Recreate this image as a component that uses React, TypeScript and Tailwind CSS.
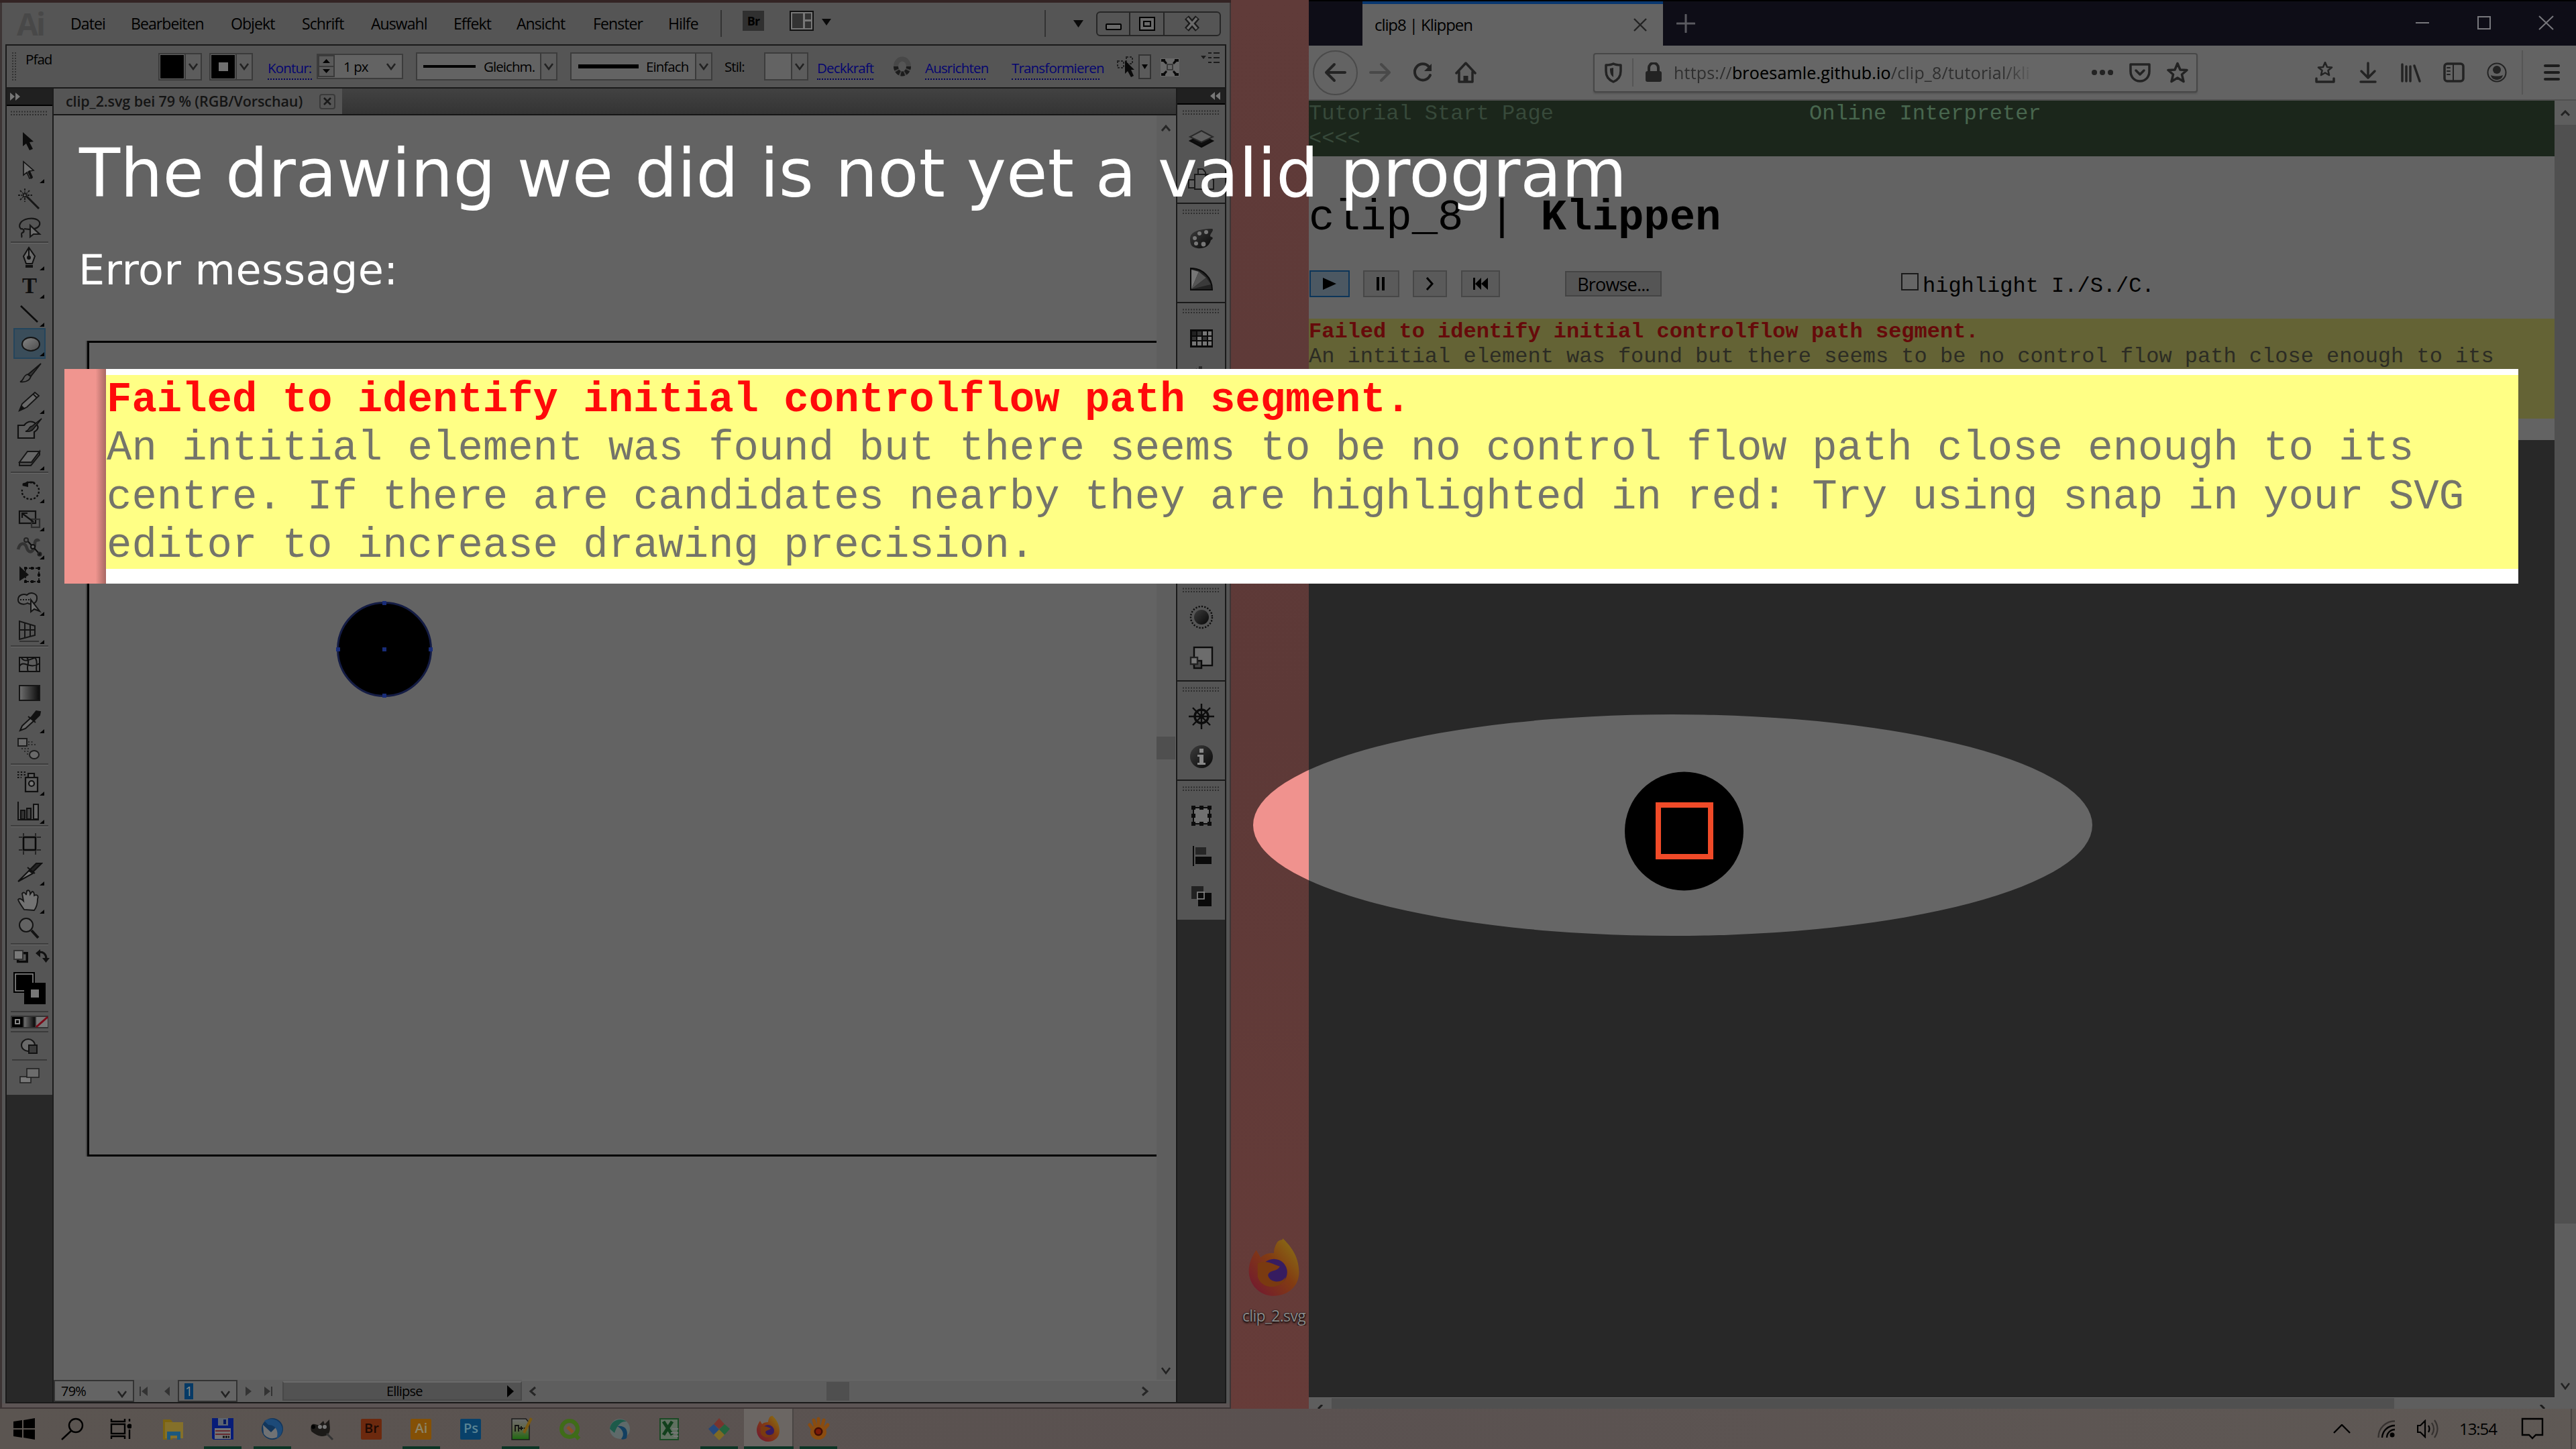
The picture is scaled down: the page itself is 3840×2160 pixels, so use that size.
import React from "react";

const UI = "font-['Open_Sans','Noto_Sans',sans-serif]";
const MONO = "font-['Liberation_Mono',monospace]";

/* ---------- shared bits ---------- */

const Chevron = ({ c = "" }: { c?: string }) => (
  <svg className={"shrink-0 " + c} width="16" height="12" viewBox="0 0 16 12" fill="none" stroke="#222" strokeWidth="2.6">
    <path d="M2 2 L8 10 L14 2" />
  </svg>
);

const Grip = ({ c = "" }: { c?: string }) => (
  <svg className={"shrink-0 " + c} width="56" height="8" viewBox="0 0 56 8" stroke="#2e2e2e" strokeWidth="2" strokeDasharray="2 2">
    <path d="M0 1.5H56M0 6H56" />
  </svg>
);

const Gradients = () => (
  <svg width="0" height="0" className="absolute">
    <defs>
      <linearGradient id="lite" x1="0" y1="0" x2="1" y2="1">
        <stop offset="0" stopColor="#858585" />
        <stop offset="1" stopColor="#4c4c4c" />
      </linearGradient>
      <linearGradient id="dark" x1="0" y1="0" x2="1" y2="1">
        <stop offset="0" stopColor="#3c3c3c" />
        <stop offset="1" stopColor="#080808" />
      </linearGradient>
      <linearGradient id="ramp" x1="0" y1="0" x2="1" y2="0">
        <stop offset="0" stopColor="#707070" />
        <stop offset="1" stopColor="#0a0a0a" />
      </linearGradient>
      <linearGradient id="flame" x1="1" y1="0" x2="0" y2="1">
        <stop offset="0" stopColor="#8a7816" />
        <stop offset="0.45" stopColor="#823c12" />
        <stop offset="1" stopColor="#701434" />
      </linearGradient>
      <linearGradient id="leaf" x1="0" y1="0" x2="0" y2="1">
        <stop offset="0" stopColor="#6c6c6c" />
        <stop offset="0.5" stopColor="#5d6648" />
        <stop offset="1" stopColor="#1c6a10" />
      </linearGradient>
    </defs>
  </svg>
);

/* ---------- Illustrator tool icons, drawn on a 40x40 grid ---------- */

const toolArt: Record<string, React.ReactNode> = {
  select: <path d="M10 6 L10 27 L15 23 L20 33 L25 31 L20 21 L26 20 Z" fill="#0c0c0c" />,
  direct: (
    <>
      <path d="M11 7 L11 27 L16 23 L20 32 L24 30 L20 21 L26 20 Z" fill="#6d6d6d" stroke="#111" strokeWidth="1.6" />
      <path d="M17 22 L22 33 L25 31 L20 20 Z" fill="#111" />
    </>
  ),
  wand: (
    <g stroke="#161616" fill="none" strokeWidth="1.8">
      <path d="M16 17 L34 35" strokeWidth="3" />
      <path d="M13 5V11M13 19V25M3 15H9M17 15H24M6 8L10 12M20 8L16 12M6 22L10 18" strokeDasharray="3 1.5" />
      <circle cx="13" cy="15" r="2.5" fill="#666" />
    </g>
  ),
  lasso: (
    <g stroke="#161616" fill="none" strokeWidth="2.2">
      <path d="M8 23 C2 18 6 9 18 7 C32 5 38 12 34 18 C31 22 22 24 12 22" />
      <path d="M8 22 C12 22 13 27 9 28 C6 31 10 31 8 35" />
      <path d="M21 17 L21 34 L26 30 L35 30 Z" fill="#6d6d6d" />
    </g>
  ),
  pen: (
    <g stroke="#111" fill="#6a6a6a" strokeWidth="2">
      <path d="M19 5 L11 18 L15 29 L24 29 L28 18 Z" />
      <path d="M19 6 V18" />
      <circle cx="19" cy="20" r="2" fill="#111" />
      <path d="M14 33 L25 33" strokeWidth="4" />
    </g>
  ),
  line: <path d="M7 8 L32 32" stroke="#0c0c0c" strokeWidth="2.6" />,
  ellipse: <ellipse cx="22" cy="21" rx="13" ry="10" fill="url(#lite)" stroke="#141414" strokeWidth="2" />,
  brush: (
    <g stroke="#141414" strokeWidth="1.8" fill="#555">
      <path d="M6 33 C12 31 10 24 17 22 L22 25 C20 32 13 34 6 33 Z" />
      <path d="M18 22 L37 6 L22 25 Z" fill="#333" />
    </g>
  ),
  pencil: (
    <g stroke="#141414" strokeWidth="1.8">
      <path d="M5 34 L9 24 L28 7 L34 12 L16 29 Z" fill="#6a6a6a" />
      <path d="M5 34 L8 27 L12 31 Z" fill="#111" />
      <path d="M25 9 L31 15" />
    </g>
  ),
  blob: (
    <g stroke="#111" strokeWidth="2.2" fill="none">
      <path d="M3 14 H12 C18 6 26 8 30 12 C36 18 30 22 27 24 V33 H3 Z" fill="#5c5c5c" />
      <path d="M14 23 C20 22 18 16 24 15 L38 4 L27 18 C24 23 18 24 14 23 Z" fill="#333" strokeWidth="1.5" />
    </g>
  ),
  eraser: (
    <g stroke="#161616" strokeWidth="2" fill="#676767">
      <path d="M5 27 L17 11 H35 L23 27 Z" />
      <path d="M5 27 V32 H22 L35 16 V11 L23 27 Z" fill="#4a4a4a" />
    </g>
  ),
  rotate: (
    <g stroke="#0e0e0e" strokeWidth="2.4" fill="none">
      <path d="M10 11 C22 4 34 11 34 20 C34 30 26 34 20 33 C12 32 8 27 9 19" strokeDasharray="3 2.4" />
      <path d="M10 12 C16 7 24 7 28 9" />
      <path d="M9 13 L18 6 V15 Z" fill="#0e0e0e" stroke="none" />
    </g>
  ),
  scale: (
    <g stroke="#111" strokeWidth="2.2" fill="none">
      <rect x="5" y="9" width="24" height="18" />
      <rect x="23" y="21" width="12" height="12" stroke="#2d2d2d" />
      <path d="M10 13 L26 25 M9 19 V12 H17" />
    </g>
  ),
  warp: (
    <g fill="none" stroke="#222" strokeWidth="2">
      <path d="M3 24 C6 12 14 14 16 22 C20 33 28 26 28 14 C29 9 33 9 34 12" strokeWidth="4.5" stroke="#333" />
      <path d="M14 8 L36 32" stroke="#0c0c0c" />
      <circle cx="15" cy="10" r="3" fill="#555" />
      <circle cx="25" cy="20" r="3" fill="#666" stroke="#111" />
      <circle cx="35" cy="31" r="2.5" fill="#111" />
    </g>
  ),
  free: (
    <g>
      <path d="M5 7 L5 29 L19 20 Z" fill="#101010" />
      <rect x="14" y="10" width="20" height="20" fill="none" stroke="#111" strokeWidth="1.8" strokeDasharray="3 2" />
      <path d="M12 8h4v4h-4zM22 8h4v4h-4zM32 8h4v4h-4zM12 28h4v4h-4zM22 28h4v4h-4zM32 28h4v4h-4zM32 18h4v4h-4z" fill="#0c0c0c" />
    </g>
  ),
  builder: (
    <g stroke="#141414" strokeWidth="2" fill="#5f5f5f">
      <path d="M3 15 C3 7 12 6 16 8 C22 2 32 6 31 13 C31 21 22 23 17 20 C12 23 3 22 3 15 Z" />
      <path d="M6 15 H20" strokeDasharray="2 2" />
      <path d="M22 15 V33 L27 29 L35 32 Z" fill="#6d6d6d" />
    </g>
  ),
  perspective: (
    <g stroke="#151515" strokeWidth="2" fill="none">
      <path d="M5 5 V32 L28 26 V12 Z M13 8V29M21 10V27M5 18H28" />
      <path d="M5 35 H34" stroke="#333" />
    </g>
  ),
  mesh: (
    <g stroke="#111" strokeWidth="2" fill="none">
      <rect x="5" y="9" width="30" height="21" fill="#5d5d5d" />
      <path d="M5 22 C12 12 20 28 35 18 M16 9 C22 16 14 22 18 30 M28 9 C34 16 28 24 31 30 M8 10 C14 18 24 10 30 9" />
    </g>
  ),
  gradient: <rect x="5" y="9" width="30" height="22" fill="url(#ramp)" stroke="#161616" strokeWidth="2" />,
  dropper: (
    <g stroke="#121212" strokeWidth="2">
      <path d="M6 35 L9 28 L22 16 L27 20 L14 32 Z" fill="#686868" />
      <path d="M18 14 L29 23 M22 16 L30 6 L36 7 L35 12 L27 20 Z" fill="#111" />
    </g>
  ),
  blend: (
    <g stroke="#1c1c1c" strokeWidth="2">
      <rect x="3" y="5" width="13" height="11" fill="#6a6a6a" />
      <ellipse cx="27" cy="29" rx="7" ry="6" fill="#6a6a6a" />
      <path d="M18 10H26M18 14H30M8 20H20M12 24H20M16 28H18" strokeDasharray="2 2.5" strokeWidth="1.6" />
    </g>
  ),
  spray: (
    <g stroke="#111" strokeWidth="2.2" fill="#5f5f5f">
      <rect x="14" y="13" width="18" height="21" />
      <path d="M18 12 V7 H27 V12" />
      <circle cx="23" cy="22" r="4" fill="#777" />
      <path d="M2 5H16M2 9H16M2 13H8" strokeDasharray="2.4 2.4" strokeWidth="2" />
    </g>
  ),
  graph: (
    <g stroke="#111" strokeWidth="2">
      <path d="M3 6 V33 H34" fill="none" />
      <rect x="7" y="19" width="6" height="13" fill="#333" />
      <rect x="16" y="16" width="6" height="16" fill="#444" />
      <rect x="26" y="10" width="7" height="22" fill="#666" />
    </g>
  ),
  artboard: (
    <g fill="none">
      <rect x="11" y="10" width="18" height="19" stroke="#0a0a0a" strokeWidth="2.6" />
      <path d="M4 10H9M4 29H9M31 10H37M31 29H37M11 4V8M29 4V8M11 31V36M29 31V36" stroke="#262626" strokeWidth="2" />
    </g>
  ),
  slice: (
    <g stroke="#101010" strokeWidth="2">
      <path d="M3 34 L19 18 L25 22 Z" fill="#777" />
      <path d="M17 13 L28 22 M20 17 L30 7 H38 L25 20 Z" fill="#222" />
    </g>
  ),
  hand: (
    <path
      d="M12 33 C8 27 4 22 3 18 C5 15 9 18 11 20 L9 9 C11 6 14 8 15 11 L16 5 C19 3 21 5 21 10 L24 6 C27 6 27 9 27 12 C31 10 34 12 32 17 C32 24 30 30 27 34 Z"
      fill="#727272"
      stroke="#151515"
      strokeWidth="1.8"
    />
  ),
  zoom: (
    <g stroke="#131313">
      <path d="M23 22 L33 33" strokeWidth="4" />
      <circle cx="15" cy="14" r="10" fill="#636363" strokeWidth="2" />
    </g>
  ),
};

const Tool = ({ name, corner = true }: { name: string; corner?: boolean }) => (
  <div className={"relative flex flex-1 items-center justify-center " + (name === "ellipse" ? "mx-[10px] border-2 border-[#24455c] bg-[#3a4d5a]" : "")}>
    {name === "type" ? (
      <span className="font-['Liberation_Serif',serif] text-[33px] font-bold leading-none text-[#0d0d0d]">T</span>
    ) : (
      <svg width="40" height="40" viewBox="0 0 40 40" className="shrink-0">
        {toolArt[name]}
      </svg>
    )}
    {corner && (
      <svg className={"absolute bottom-[2px] " + (name === "ellipse" ? "right-0" : "right-[12px]")} width="7" height="6" viewBox="0 0 7 6">
        <path d="M7 0V6H0Z" fill="#050505" />
      </svg>
    )}
  </div>
);

const Rule = ({ c = "" }: { c?: string }) => <div className={"mx-[6px] h-[3px] shrink-0 border-t-2 border-[#3c3c3c] bg-[#6a6a6a] " + c} />;

const ToolGroup = ({ h, items }: { h: string; items: [string, boolean][] }) => (
  <div className={"flex shrink-0 flex-col " + h}>
    {items.map(([n, c]) => (
      <Tool key={n} name={n} corner={c} />
    ))}
  </div>
);

const ToolPanel = () => (
  <div className="flex w-[70px] shrink-0 flex-col border-r-2 border-[#1c1c1c] bg-[#282828]">
    <div className="flex h-[24px] shrink-0 items-center bg-[#202020] pl-[5px]">
      <svg width="16" height="12" viewBox="0 0 16 12" fill="#777">
        <path d="M0 0L7 6L0 12ZM8 0L15 6L8 12Z" />
      </svg>
    </div>
    <div className="flex h-[1476px] shrink-0 flex-col border-t-2 border-black bg-[#555]">
      <Grip c="ml-[6px] mt-[7px] mb-[17px]" />
      <ToolGroup h="h-[170px]" items={[["select", false], ["direct", true], ["wand", false], ["lasso", false]]} />
      <Rule />
      <ToolGroup h="h-[340px]" items={[["pen", true], ["type", true], ["line", true], ["ellipse", true], ["brush", false], ["pencil", true], ["blob", false], ["eraser", true]]} />
      <Rule c="mb-[4px]" />
      <ToolGroup h="h-[252px]" items={[["rotate", true], ["scale", true], ["warp", true], ["free", false], ["builder", true], ["perspective", true]]} />
      <Rule c="mb-[5px]" />
      <ToolGroup h="h-[167px]" items={[["mesh", false], ["gradient", false], ["dropper", true], ["blend", false]]} />
      <Rule c="mt-[1px] mb-[4px]" />
      <ToolGroup h="h-[85px]" items={[["spray", true], ["graph", true]]} />
      <Rule c="mb-[4px]" />
      <ToolGroup h="h-[169px]" items={[["artboard", false], ["slice", true], ["hand", true], ["zoom", false]]} />
      <Rule />
      <svg className="shrink-0" width="68" height="220" viewBox="0 0 68 220">
        <rect x="16" y="15" width="16" height="15" fill="none" stroke="#0b0b0b" strokeWidth="4" transform="translate(3 -1) scale(0.85)" />
        <rect x="11" y="8" width="13" height="13" fill="#7a7a7a" stroke="#333" strokeWidth="2" />
        <path d="M47 11 C54 8 59 14 59 20" fill="none" stroke="#111" strokeWidth="3" />
        <path d="M43 12L50 6V18ZM53 19H64L58.500 26Z" fill="#111" />
        <rect x="11" y="41" width="30" height="29" fill="#000" stroke="#000" strokeWidth="2" />
        <rect x="13" y="43" width="26" height="25" fill="none" stroke="#8a8a8a" strokeWidth="1.6" />
        <rect x="26" y="56" width="32" height="32" fill="#000" />
        <rect x="36" y="66" width="12" height="12" fill="#777" />
        <path d="M6 99H62M6 129H62M8 171H60" stroke="#3a3a3a" strokeWidth="2" />
        <rect x="6" y="105" width="56" height="19" fill="#333" />
        <rect x="8" y="107" width="16" height="15" fill="#000" />
        <rect x="13" y="111" width="6" height="6" fill="none" stroke="#888" strokeWidth="2" />
        <rect x="26" y="107" width="16" height="15" fill="url(#ramp)" />
        <rect x="44" y="107" width="17" height="15" fill="#777" />
        <path d="M44 122L61 107" stroke="#7a0a18" strokeWidth="3" />
        <ellipse cx="32" cy="149" rx="10" ry="9" fill="#6a6a6a" stroke="#161616" strokeWidth="2" />
        <rect x="33" y="149" width="12" height="12" fill="#3a3a3a" stroke="#111" strokeWidth="2" />
        <rect x="20" y="196" width="16" height="9" fill="#787878" stroke="#222" strokeWidth="1.6" />
        <rect x="30" y="184" width="18" height="13" fill="#6c6c6c" stroke="#222" strokeWidth="1.6" />
      </svg>
    </div>
  </div>
);

/* ---------- Illustrator dock ---------- */

const dockArt: Record<string, React.ReactNode> = {
  layers: (
    <>
      <path d="M3 22 L20 14 L37 22 L20 31 Z" fill="#0e0e0e" stroke="#0a0a0a" strokeWidth="2" />
      <path d="M3 16 L20 7 L37 16 L20 24 Z" fill="#5e5e5e" stroke="#2a2a2a" strokeWidth="2" />
    </>
  ),
  boards: (
    <g fill="#606060" stroke="#1a1a1a" strokeWidth="2">
      <rect x="1" y="20" width="12" height="12" />
      <path d="M15 4 H22 L26 9 V14 H15 Z" />
      <rect x="10" y="12" width="20" height="22" />
      <path d="M26 14H32L38 20V34H26Z" />
    </g>
  ),
  palette: (
    <g>
      <path d="M3 20 C3 10 15 5 36 5 C40 8 30 14 34 17 C39 18 36 21 34 22 C32 32 22 35 14 34 C5 33 3 28 3 20 Z" fill="url(#dark)" />
      <g fill="#777">
        <circle cx="10" cy="19" r="3" />
        <circle cx="17" cy="12" r="3" />
        <circle cx="27" cy="10" r="3" />
        <circle cx="12" cy="27" r="3" />
        <circle cx="23" cy="28" r="3.4" />
      </g>
    </g>
  ),
  guide: (
    <g>
      <path d="M4 4 C22 4 36 18 36 36 H4 Z" fill="#222" stroke="#0a0a0a" strokeWidth="2" />
      <path d="M5 35 V6 L16 9 Z" fill="#777" />
      <path d="M5 35 L16 9 L27 18 Z" fill="#555" />
      <path d="M5 35 L27 18 L34 28 Z" fill="#3a3a3a" />
    </g>
  ),
  swatches: (
    <g>
      <rect x="3" y="7" width="34" height="27" fill="#0a0a0a" />
      <g fill="#777">
        <path d="M6 10h6v6h-6z" fill="#222" />
        <path d="M14 10h6v6h-6zM6 18h6v5h-6zM22 18h6v5h-6z" fill="#333" />
        <path d="M22 10h6v6h-6zM30 10h5v6h-5zM14 18h6v5h-6zM30 18h5v5h-5zM6 25h6v6h-6zM14 25h6v6h-6zM22 25h6v6h-6zM30 25h5v6h-5z" />
      </g>
    </g>
  ),
  brushes: <path d="M6 9L13 5V34H8ZM16 2H21V34H15ZM24 6H30V34H24Z" fill="#2a2a2a" />,
  appearance: (
    <g>
      <circle cx="20" cy="20" r="16" fill="#555" stroke="#0c0c0c" strokeWidth="2.4" strokeDasharray="2.2 2.2" />
      <circle cx="20" cy="20" r="11" fill="url(#dark)" />
    </g>
  ),
  styles: (
    <g stroke="#0c0c0c" strokeWidth="2.4">
      <rect x="9" y="5" width="27" height="27" fill="#6c6c6c" />
      <rect x="9" y="25" width="11" height="11" fill="#444" />
      <rect x="4" y="20" width="10" height="10" fill="#777" stroke="#222" />
    </g>
  ),
  wheel: (
    <g stroke="#0c0c0c" fill="none" strokeWidth="2.4">
      <circle cx="20" cy="20" r="10" strokeWidth="3.4" />
      <path d="M20 1V39M1 20H39M7 7L33 33M33 7L7 33" />
      <circle cx="20" cy="20" r="2.5" fill="#0c0c0c" />
    </g>
  ),
  info: (
    <g>
      <circle cx="20" cy="20" r="17" fill="url(#dark)" />
      <path d="M17 8h6v6h-6zM14 17h9v12h3v3h-12v-3h3v-9h-3z" fill="#888" />
    </g>
  ),
  transform: (
    <g fill="#0c0c0c">
      <rect x="8" y="8" width="24" height="24" fill="#707070" stroke="#0c0c0c" strokeWidth="2" />
      <path d="M5 5h6v6h-6zM17 5h6v6h-6zM29 5h6v6h-6zM5 17h6v6h-6zM29 17h6v6h-6zM5 29h6v6h-6zM17 29h6v6h-6zM29 29h6v6h-6z" />
    </g>
  ),
  align: (
    <g fill="#0a0a0a">
      <path d="M7 5h2v30h-2zM11 21h24v11h-24z" />
      <rect x="11" y="7" width="16" height="11" fill="#262626" />
    </g>
  ),
  pathfinder: (
    <g>
      <rect x="5" y="5" width="18" height="19" fill="#222" />
      <rect x="15" y="15" width="20" height="20" fill="#090909" />
      <rect x="14" y="14" width="10" height="10" fill="#0a0a0a" stroke="#888" strokeWidth="1.6" />
    </g>
  ),
};

const DockGroup = ({ items, last }: { items: string[]; last?: boolean }) => (
  <div className={"flex shrink-0 flex-col items-center pt-[8px] " + (last ? "h-[207px]" : items.length === 3 ? "h-[208px] border-b-2 border-[#1a1a1a]" : "h-[148px] border-b-2 border-[#1a1a1a]")}>
    <Grip />
    <div className="mt-[6px] flex flex-col">
      {items.map((n) => (
        <div key={n} className="flex h-[60px] items-center">
          <svg width="40" height="40" viewBox="0 0 40 40">{dockArt[n]}</svg>
        </div>
      ))}
    </div>
  </div>
);

const Dock = () => (
  <div className="flex w-[73px] shrink-0 flex-col border-l-2 border-[#1a1a1a] bg-[#282828]">
    <div className="flex h-[24px] shrink-0 items-center justify-end border-b-2 border-black bg-[#202020] pr-[6px]">
      <svg width="16" height="12" viewBox="0 0 16 12" fill="#777">
        <path d="M7 0L0 6L7 12ZM15 0L8 6L15 12Z" />
      </svg>
    </div>
    <div className="flex flex-col bg-[#555]">
      <DockGroup items={["layers", "boards"]} />
      <DockGroup items={["palette", "guide"]} />
      <DockGroup items={["swatches", "brushes", "styles"]} />
      <DockGroup items={["transform", "align", "pathfinder"]} />
      <DockGroup items={["appearance", "styles"]} />
      <DockGroup items={["wheel", "info"]} />
      <DockGroup items={["transform", "align", "pathfinder"]} last />
    </div>
  </div>
);

/* ---------- Illustrator window ---------- */

const menus: [string, string][] = [
  ["Datei", "w-[90px]"],
  ["Bearbeiten", "w-[149px]"],
  ["Objekt", "w-[106px]"],
  ["Schrift", "w-[103px]"],
  ["Auswahl", "w-[123px]"],
  ["Effekt", "w-[94px]"],
  ["Ansicht", "w-[114px]"],
  ["Fenster", "w-[112px]"],
  ["Hilfe", "w-[78px]"],
];

const MenuBar = () => (
  <div className="flex h-[62px] shrink-0 items-center bg-[#555] pl-[22px]">
    <span className="w-[80px] text-[46px] font-bold leading-none tracking-[-0.06em] text-[#484848]">Ai</span>
    {menus.map(([m, w]) => (
      <span key={m} className={"shrink-0 whitespace-nowrap text-[23px] leading-none tracking-[-0.04em] text-black " + w}>{m}</span>
    ))}
    <div className="h-[40px] w-[2px] bg-[#333]" />
    <div className="ml-[31px] mb-[8px] flex h-[30px] w-[32px] items-center justify-center bg-[#303030] text-[18px] font-bold leading-none tracking-[-0.05em] text-black">Br</div>
    <svg className="ml-[38px] mb-[8px]" width="62" height="30" viewBox="0 0 62 30">
      <rect x="1" y="1" width="34" height="28" fill="#777" stroke="#111" strokeWidth="2" />
      <path d="M4 4H20V26H4ZM23 4H32V13H23ZM23 16H32V26H23Z" fill="#333" />
      <path d="M48 12H62L55 22Z" fill="#0a0a0a" />
    </svg>
    <div className="ml-[318px] h-[40px] w-[2px] bg-[#333]" />
    <svg className="ml-[41px]" width="15" height="11" viewBox="0 0 15 11">
      <path d="M0 0H15L7.5 11Z" fill="#0a0a0a" />
    </svg>
    <div className="ml-[19px] flex h-[37px] w-[186px] rounded-[6px] border-2 border-[#262626]">
      <div className="flex w-[49px] items-end justify-center border-r-2 border-[#262626] pb-[7px]">
        <div className="h-[10px] w-[24px] rounded-[2px] border-2 border-black bg-[#6a6a6a]" />
      </div>
      <div className="flex w-[51px] items-center justify-center border-r-2 border-[#262626]">
        <div className="flex h-[21px] w-[24px] items-center justify-center border-2 border-black bg-[#6a6a6a]">
          <div className="h-[9px] w-[12px] border-2 border-black" />
        </div>
      </div>
      <div className="flex flex-1 items-center justify-center">
        <svg width="26" height="24" viewBox="0 0 26 24" fill="none">
          <path d="M5 3L21 21M21 3L5 21" stroke="#1a1a1a" strokeWidth="8" />
          <path d="M6 4L20 20M20 4L6 20" stroke="#6c6c6c" strokeWidth="3.5" />
        </svg>
      </div>
    </div>
  </div>
);

const Link = ({ t, w }: { t: string; w: string }) => (
  <span className={"shrink-0 whitespace-nowrap border-b-2 border-dotted border-[#05055c] pb-[5px] text-[20.500px] leading-[22px] tracking-[-0.04em] text-[#050570] " + w}>{t}</span>
);

const Drop = () => (
  <div className="ml-auto flex h-full w-[24px] items-center justify-center border-l-2 border-[#3a3a3a] bg-[#5c5c5c]">
    <Chevron />
  </div>
);

const ControlBar = () => (
  <div className="flex h-[62px] shrink-0 items-center bg-[#555] text-[20.500px] leading-none tracking-[-0.045em] text-black">
    <svg className="ml-[8px] shrink-0" width="6" height="42" viewBox="0 0 6 42" stroke="#333" strokeWidth="2" strokeDasharray="2 2">
      <path d="M1 0V42M5 0V42" />
    </svg>
    <span className="mb-[22px] ml-[14px] w-[198px] shrink-0">Pfad</span>
    <div className="flex h-[41px] w-[65px] shrink-0 border-2 border-[#3a3a3a] bg-[#666]">
      <div className="m-[1px] w-[35px] bg-black" />
      <Drop />
    </div>
    <div className="ml-[11px] flex h-[41px] w-[65px] shrink-0 border-2 border-[#3a3a3a] bg-[#666]">
      <div className="m-[1px] flex w-[35px] items-center justify-center bg-black">
        <div className="h-[13px] w-[14px] bg-[#707070]" />
      </div>
      <Drop />
    </div>
    <div className="ml-[22px] mt-[10px] flex w-[73px]">
      <Link t="Kontur:" w="w-[66px]" />
    </div>
    <div className="flex h-[38px] w-[129px] shrink-0 items-center border-2 border-[#3c3c3c] bg-[#636363]">
      <svg className="shrink-0" width="26" height="34" viewBox="0 0 26 34">
        <rect x="1" y="1" width="23" height="31" fill="#5a5a5a" stroke="#3a3a3a" strokeWidth="2" />
        <path d="M1 17H25" stroke="#3a3a3a" strokeWidth="2" />
        <path d="M7 12H18L12.500 6ZM7 21H18L12.500 27Z" fill="#050505" />
      </svg>
      <span className="ml-[12px]">1 px</span>
      <Chevron c="ml-auto mr-[8px]" />
    </div>
    <div className="ml-[19px] flex h-[42px] w-[211px] shrink-0 items-center border-2 border-[#3c3c3c] bg-[#636363]">
      <div className="ml-[9px] h-[4px] w-[78px] bg-black" />
      <span className="ml-[12px]">Gleichm.</span>
      <Drop />
    </div>
    <div className="ml-[19px] flex h-[42px] w-[212px] shrink-0 items-center border-2 border-[#3c3c3c] bg-[#636363]">
      <div className="ml-[10px] h-[6px] w-[90px] bg-black" />
      <span className="ml-[11px]">Einfach</span>
      <Drop />
    </div>
    <span className="ml-[18px] w-[59px] shrink-0">Stil:</span>
    <div className="flex h-[42px] w-[66px] shrink-0 border-2 border-[#3c3c3c] bg-[#636363]">
      <Drop />
    </div>
    <div className="ml-[13px] mt-[10px] flex shrink-0 items-start">
      <Link t="Deckkraft" w="w-[84px]" />
    </div>
    <svg className="ml-[27px] shrink-0" width="32" height="36" viewBox="0 0 32 36">
      <ellipse cx="16" cy="18" rx="9.500" ry="11" fill="none" stroke="#484848" strokeWidth="7" />
      <path d="M6.500 18A9.500 11 0 0 0 25.500 18" fill="none" stroke="#1c1c1c" strokeWidth="7" strokeDasharray="5 2" />
    </svg>
    <div className="ml-[18px] mt-[10px] flex shrink-0 gap-[39px]">
      <Link t="Ausrichten" w="w-[90px]" />
      <Link t="Transformieren" w="w-[131px]" />
    </div>
    <svg className="ml-[24px] shrink-0" width="110" height="44" viewBox="0 0 110 44">
      <path d="M3 14h9v10h-9zM16 8h9v10h-9z" fill="none" stroke="#222" strokeWidth="2" strokeDasharray="3 2" />
      <path d="M14 13V33L18 29L23 38L27 36L23 27H28Z" fill="#0a0a0a" />
      <rect x="35" y="5" width="17" height="35" fill="#5b5b5b" stroke="#333" strokeWidth="2" />
      <path d="M39 19H48L43.500 26Z" fill="#050505" />
      <rect x="67" y="10" width="28" height="27" fill="#686868" />
      <path d="M68 11h6v2l3 4l-2 2l-4-4h-3ZM94 11h-6v2l-3 4l2 2l4-4h3ZM68 36h6v-2l3-4l-2-2l-4 4h-3ZM94 36h-6v-2l-3-4l2-2l4 4h3Z" fill="#0a0a0a" />
      <rect x="77" y="19" width="8" height="8" fill="#666" stroke="#333" strokeWidth="1.600" />
    </svg>
    <svg className="mb-[26px] ml-[17px] shrink-0" width="28" height="18" viewBox="0 0 28 18" stroke="#1c1c1c" strokeWidth="2">
      <path d="M0 6H8L4 11Z" fill="#1c1c1c" stroke="none" />
      <path d="M11 2H16M11 9H16M11 16H16M19 2H28M19 9H28M19 16H28" />
    </svg>
  </div>
);

const Canvas = () => (
  <div className="flex min-h-0 flex-1 bg-[#636363]">
    <div className="relative flex-1 overflow-hidden">
      <div className="mt-[336px] ml-[50px] h-[1216px] w-[1700px] border-[3px] border-black shadow-[-2px_0_0_#4a4a4a]" />
      <svg className="absolute left-[420px] top-[723px]" width="146" height="146" viewBox="0 0 146 146">
        <circle cx="73" cy="73" r="69.500" fill="#000" stroke="#141c44" strokeWidth="3" />
        <path d="M70 1h6v6h-6zM70 139h6v6h-6zM1 70h6v6h-6zM139 70h6v6h-6zM70 70h6v6h-6z" fill="#182c78" />
      </svg>
    </div>
    <div className="flex w-[28px] shrink-0 flex-col items-center bg-[#5e5e5e] pt-[13px]">
      <svg width="16" height="12" viewBox="0 0 16 12" fill="none" stroke="#262626" strokeWidth="3">
        <path d="M2 10L8 3L14 10" />
      </svg>
      <div className="mt-[901px] h-[34px] w-[28px] bg-[#4f4f4f]" />
      <Chevron c="mt-auto mb-[8px]" />
    </div>
    <div className="w-[1px] bg-[#636363]" />
  </div>
);

const StatusBar = () => (
  <div className="flex h-[33px] shrink-0 items-center bg-[#5e5e5e] text-[20px] leading-none tracking-[-0.04em] text-black">
    <div className="flex h-full w-[120px] items-center border-2 border-[#333] bg-[#646464] pl-[9px] pr-[8px]">
      <span>79%</span>
      <Chevron c="ml-auto mt-[8px]" />
    </div>
    <svg className="ml-[7px]" width="50" height="16" viewBox="0 0 50 16" fill="#333">
      <path d="M1 1h2v14h-2zM13 1V15L4 8ZM46 1V15L38 8Z" />
    </svg>
    <div className="ml-[8px] flex h-full w-[89px] items-center border-2 border-[#333] bg-[#646464] pl-[8px] pr-[8px]">
      <span className="bg-[#063a66] px-[1px] py-[2px] text-[#888]">1</span>
      <Chevron c="ml-auto mt-[8px]" />
    </div>
    <svg className="ml-[12px]" width="44" height="16" viewBox="0 0 44 16" fill="#333">
      <path d="M0 1V15L9 8ZM28 1V15L37 8ZM38 1h2v14h-2z" />
    </svg>
    <div className="ml-[11px] flex h-[29px] w-[357px] items-center border-2 border-[#484848] border-t-[#6a6a6a] bg-[#525252] pl-[153px]">
      <span>Ellipse</span>
      <svg className="ml-auto mr-[10px]" width="10" height="18" viewBox="0 0 10 18">
        <path d="M0 0L10 9L0 18Z" fill="#000" />
      </svg>
    </div>
    <div className="flex h-full flex-1 items-center border-t border-[#686868] pl-[10px] pr-[40px]">
      <svg width="12" height="16" viewBox="0 0 12 16" fill="none" stroke="#262626" strokeWidth="3">
        <path d="M10 2L3 8L10 14" />
      </svg>
      <div className="ml-[432px] h-[28px] w-[34px] bg-[#4f4f4f]" />
      <svg className="ml-auto" width="12" height="16" viewBox="0 0 12 16" fill="none" stroke="#262626" strokeWidth="3">
        <path d="M2 2L9 8L2 14" />
      </svg>
    </div>
  </div>
);

const Illustrator = () => (
  <div className={"absolute left-0 top-[4px] flex h-[2096px] w-[1835px] flex-col border-l-[3px] border-r-2 border-b-2 border-[#3d3535] bg-[#555] " + UI}>
    <MenuBar />
    <div className="ml-[5px] mr-[5px] flex min-h-0 flex-1 flex-col border-2 border-[#1a1a1a]">
      <ControlBar />
      <div className="flex min-h-0 flex-1 border-t-2 border-[#1a1a1a]">
        <ToolPanel />
        <div className="flex min-w-0 flex-1 flex-col">
          <div className="flex h-[40px] shrink-0 border-b-2 border-[#161616] bg-gradient-to-b from-[#424242] to-[#343434]">
            <div className="flex w-[430px] items-center bg-[#555] pl-[18px]">
              <span className="whitespace-nowrap text-[21.500px] font-semibold leading-none tracking-[-0.005em] text-[#141414]">clip_2.svg bei 79 % (RGB/Vorschau)</span>
              <div className="ml-auto mr-[10px] flex h-[23px] w-[24px] shrink-0 items-center justify-center rounded-[4px] border-2 border-[#3a3a3a]">
                <svg width="12" height="12" viewBox="0 0 12 12" stroke="#1a1a1a" strokeWidth="2.600">
                  <path d="M1 1L11 11M11 1L1 11" />
                </svg>
              </div>
            </div>
          </div>
          <Canvas />
          <StatusBar />
        </div>
        <Dock />
      </div>
    </div>
    <div className="h-[6px] shrink-0 bg-[#5c5454]" />
  </div>
);

/* ---------- Firefox window ---------- */

const IconBox = ({ w, children }: { w: string; children: React.ReactNode }) => (
  <div className={"flex shrink-0 items-center justify-center " + w}>
    <svg width="32" height="32" viewBox="0 0 32 32" fill="none" stroke="#232323" strokeWidth="3.500" strokeLinecap="round" strokeLinejoin="round">
      {children}
    </svg>
  </div>
);

const FirefoxTabs = () => (
  <div className="flex h-[66px] shrink-0 bg-[#0e0d17]">
    <div className="ml-[80px] flex w-[448px] items-center border-t-4 border-[#08376f] bg-[#636363] pl-[18px] pr-[24px]">
      <span className="text-[24px] leading-none tracking-[-0.045em] text-black">clip8 | Klippen</span>
      <svg className="ml-auto" width="20" height="20" viewBox="0 0 20 20" stroke="#232323" strokeWidth="2.400">
        <path d="M1 1L19 19M19 1L1 19" />
      </svg>
    </div>
    <svg className="ml-[20px] mt-[19px]" width="28" height="28" viewBox="0 0 28 28" stroke="#5a5a60" strokeWidth="3" strokeLinecap="round">
      <path d="M14 1V27M1 14H27" />
    </svg>
    <svg className="ml-auto mr-[33px] mt-[20px]" width="206" height="24" viewBox="0 0 206 24" fill="none" stroke="#77777c" strokeWidth="2">
      <path d="M0 12H20M184 2L205 22M205 2L184 22" />
      <rect x="93" y="3" width="18" height="18" />
    </svg>
  </div>
);

const star = "M16 2.500L20 12L30 12.500L22.500 19L25 29.500L16 24L7 29.500L9.500 19L2 12.500L12 12Z";

const FirefoxToolbar = () => (
  <div className="flex h-[82px] shrink-0 items-center border-b-2 border-[#505050] bg-[#636363] pl-[6px]">
    <div className="flex h-[67px] w-[67px] shrink-0 items-center justify-center rounded-full border-2 border-[#4a4a4a]">
      <svg width="34" height="32" viewBox="0 0 34 32" fill="none" stroke="#232323" strokeWidth="4" strokeLinecap="round" strokeLinejoin="round">
        <path d="M15 4L3 16L15 28M4 16H31" />
      </svg>
    </div>
    <div className="flex w-[65px] justify-center opacity-40">
      <svg width="34" height="32" viewBox="0 0 34 32" fill="none" stroke="#232323" strokeWidth="4" strokeLinecap="round" strokeLinejoin="round">
        <path d="M19 4L31 16L19 28M30 16H3" />
      </svg>
    </div>
    <IconBox w="w-[63px]">
      <path d="M27 20A12 12 0 1 1 25 7.500" strokeWidth="4" />
      <path d="M29 3V14H18Z" fill="#232323" stroke="none" />
    </IconBox>
    <IconBox w="w-[65px]">
      <path d="M2 17L16 2L30 17M6 15V30H26V15" />
      <path d="M16 29V21" strokeWidth="7" strokeLinecap="butt" />
    </IconBox>
    <div className="ml-[158px] flex h-[59px] w-[901px] shrink-0 items-center rounded-[4px] border-2 border-[#474747] bg-[#666] shadow-[0_2px_2px_#555]">
      <IconBox w="w-[56px]">
        <path d="M16 3C12 5 8 5 5 5V14C5 22 9 27 16 30C23 27 27 22 27 14V5C24 5 20 5 16 3Z" />
        <path d="M16 9V23C12 20 11 17 11 10Z" fill="#232323" stroke="none" />
      </IconBox>
      <div className="h-[42px] w-[2px] bg-[#555]" />
      <div className="flex w-[60px] justify-center">
        <svg width="26" height="30" viewBox="0 0 26 30">
          <rect x="1" y="13" width="24" height="16" rx="3" fill="#232323" />
          <path d="M6 14V8A7 7 0 0 1 20 8V14" fill="none" stroke="#232323" strokeWidth="4" />
        </svg>
      </div>
      <span className="whitespace-nowrap bg-gradient-to-r from-[#2e2e2e] from-92% to-[#5c5c5c] bg-clip-text text-[25px] leading-[36px] tracking-[0.008em] text-transparent">
        https://<span className="text-black">broesamle.github.io</span>/clip_8/tutorial/kli
      </span>
      <div className="ml-auto flex">
        <IconBox w="w-[56px]">
          <path d="M4 16h.1M16 16h.1M28 16h.1" strokeWidth="8" />
        </IconBox>
        <IconBox w="w-[56px]">
          <path d="M2 4H30V14C30 23 24 29 16 29C8 29 2 23 2 14Z" />
          <path d="M10 13L16 19L22 13" />
        </IconBox>
        <IconBox w="w-[56px]">
          <path d={star} />
        </IconBox>
      </div>
    </div>
    <div className="ml-auto flex items-center">
      <IconBox w="w-[64px]">
        <path d="M16 1L19 8L26 8.500L20.500 13L22 20L16 16.500L10 20L11.500 13L6 8.500L13 8Z" strokeWidth="2.600" />
        <path d="M3 25V30H29V25" />
      </IconBox>
      <IconBox w="w-[64px]">
        <path d="M16 2V23M6 14L16 24L26 14M5 30H27" />
      </IconBox>
      <IconBox w="w-[64px]">
        <path d="M3 4V29M9 7V29M15 7V29M21 6L29 29" />
      </IconBox>
      <IconBox w="w-[64px]">
        <rect x="2" y="3" width="28" height="26" rx="4" />
        <path d="M15 4V28" strokeWidth="2" />
        <path d="M6 9h4M6 14h4M6 19h4" strokeWidth="2" />
      </IconBox>
      <IconBox w="w-[64px]">
        <circle cx="16" cy="16" r="13.500" strokeWidth="2" />
        <circle cx="16" cy="12" r="6" fill="#232323" stroke="none" />
        <path d="M7 20C12 22 20 22 25 20C24 25 20 27 16 27C12 27 8 25 7 20Z" fill="#232323" stroke="none" />
      </IconBox>
      <div className="ml-[5px] h-[66px] w-[2px] bg-[#555]" />
      <div className="ml-[31px] mr-[24px] flex flex-col gap-[6px]">
        <div className="h-[4px] w-[24px] rounded bg-[#1c1c1c]" />
        <div className="h-[4px] w-[24px] rounded bg-[#1c1c1c]" />
        <div className="h-[4px] w-[24px] rounded bg-[#1c1c1c]" />
      </div>
    </div>
  </div>
);

const btn = "flex h-[40px] shrink-0 items-center justify-center border-2 border-[#474747] bg-[#5a5a5a]";

const PageBody = () => (
  <div className={"flex min-w-0 flex-1 flex-col " + MONO}>
    <div className="flex h-[83px] shrink-0 whitespace-pre bg-[#1b261b] pt-[2px] text-[32px] leading-[36.500px] text-[#37493a]">
      <div className="w-[746px]">
        <p>Tutorial Start Page</p>
        <p>&lt;&lt;&lt;&lt;</p>
      </div>
      <p className="text-[#48664e]">Online Interpreter</p>
    </div>
    <h1 className="mt-[56px] h-[72px] shrink-0 whitespace-pre text-[64px] leading-[72px] text-black">
      clip_8 | <b>Klippen</b>
    </h1>
    <div className="mt-[42px] flex h-[40px] shrink-0 items-center">
      <div className="ml-[1px] flex h-[40px] w-[60px] items-center justify-center border-2 border-[#0c3559] bg-[#4c5862]">
        <svg width="20" height="20" viewBox="0 0 20 20"><path d="M0 1L20 10L0 19Z" fill="#000" /></svg>
      </div>
      <div className={btn + " ml-[20px] w-[54px]"}>
        <svg width="14" height="20" viewBox="0 0 14 20"><path d="M0 0h4v20h-4zM8 0h4v20h-4z" fill="#000" /></svg>
      </div>
      <div className={btn + " ml-[20px] w-[51px]"}>
        <svg width="14" height="20" viewBox="0 0 14 20" fill="none" stroke="#000" strokeWidth="3"><path d="M2 1L10 10L2 19" /></svg>
      </div>
      <div className={btn + " ml-[21px] w-[58px]"}>
        <svg width="22" height="18" viewBox="0 0 22 18"><path d="M0 0h3v18h-3zM12 0V18L3 9ZM22 0V18L12 9Z" fill="#000" /></svg>
      </div>
      <div className={"ml-[97px] flex h-[38px] w-[144px] items-center justify-center border-2 border-[#444] bg-[#555] text-[27px] leading-none tracking-[-0.03em] text-black " + UI}>Browse...</div>
      <div className="mb-[6px] ml-[357px] h-[26px] w-[26px] border-2 border-[#1a1a1a] bg-[#666]" />
      <span className="ml-[6px] mt-[7px] whitespace-pre text-[32px] leading-[36px] text-black">highlight I./S./C.</span>
    </div>
    <div className="mt-[32px] h-[149px] shrink-0 overflow-hidden bg-[#646335] pt-[1px] text-[32px] leading-[37px] text-[#2c2c24]">
      <p className="whitespace-pre font-bold text-[#660a0a]">Failed to identify initial controlflow path segment.</p>
      <p className="whitespace-pre">An intitial element was found but there seems to be no control flow path close enough to its</p>
    </div>
    <div className="mt-[32px] flex-1 bg-[#282828]" />
    <div className="flex h-[17px] shrink-0 items-end border-t border-[#6a6a6a] bg-[#5e5e5e]">
      <svg className="ml-[12px]" width="10" height="6" viewBox="0 0 10 6" stroke="#1c1c1c" strokeWidth="3"><path d="M8 0L2 6" /></svg>
      <div className="ml-[12px] h-full w-[1584px] bg-[#505050]" />
      <svg className="ml-[216px]" width="10" height="6" viewBox="0 0 10 6" stroke="#1c1c1c" strokeWidth="3"><path d="M2 0L8 6" /></svg>
    </div>
  </div>
);

const Firefox = () => (
  <div className={"absolute left-[1951px] top-0 flex h-[2100px] w-[1889px] flex-col border-t-2 border-black bg-[#636363] " + UI}>
    <FirefoxTabs />
    <FirefoxToolbar />
    <div className="flex min-h-0 flex-1">
      <PageBody />
      <div className="flex w-[32px] shrink-0 flex-col items-center bg-[#5e5e5e] pt-[14px]">
        <svg width="14" height="10" viewBox="0 0 14 10" fill="none" stroke="#222" strokeWidth="3"><path d="M1 8L7 2L13 8" /></svg>
        <div className="mt-[12px] h-[1638px] w-full bg-[#505050]" />
        <Chevron c="mt-auto mb-[28px]" />
      </div>
    </div>
  </div>
);

/* ---------- desktop and taskbar ---------- */

const FoxArt = () => (
  <g>
    <path d="M22 3C24 0 26 2 26 0C30 4 37 11 37 23C37 33 29 39 20 39C10 39 3 31 3 22C3 16 6 11 8 8L11 13C14 10 18 10 20 10C20 7 21 5 22 3Z" fill="url(#flame)" />
    <circle cx="20" cy="23" r="9" fill="#361c60" />
    <path d="M9 17C15 14 20 18 24 19C22 23 17 21 16 25C17 30 25 31 28 26C27 34 12 36 9 26Z" fill="#7a3a10" />
  </g>
);

const taskIcons: { id: string; run?: boolean; art: React.ReactNode }[] = [
  {
    id: "folder",
    art: (
      <g>
        <path d="M5 6H16L19 9V36H5Z" fill="#7c6410" />
        <rect x="8" y="10" width="27" height="24" fill="#84702a" />
        <path d="M11 36V24H31V36H26V30H16V36Z" fill="#1c587e" />
      </g>
    ),
  },
  {
    id: "floppy",
    run: true,
    art: (
      <g>
        <path d="M4 4H36V36H6L4 34Z" fill="#071c78" />
        <rect x="13" y="4" width="15" height="11" fill="#5c6470" />
        <rect x="21" y="6" width="4" height="7" fill="#061a60" />
        <rect x="8" y="19" width="24" height="16" fill="#747474" />
        <path d="M9 23H31M9 28H31" stroke="#601018" strokeWidth="1.500" />
        <path d="M20 32H30" stroke="#111" strokeWidth="3" strokeDasharray="3 1" />
      </g>
    ),
  },
  {
    id: "thunderbird",
    run: true,
    art: (
      <g>
        <circle cx="20" cy="20" r="16" fill="#12365c" />
        <path d="M6 14L18 25L30 13L33 27C26 37 12 36 7 27Z" fill="#707274" />
        <path d="M8 8C18 2 33 6 35 20C34 30 28 34 26 35C30 25 26 14 14 14Z" fill="#1d4a78" />
      </g>
    ),
  },
  {
    id: "gimp",
    art: (
      <g>
        <path d="M4 15C7 10 12 15 16 14L22 8L24 13L31 6C31 16 34 22 29 28C22 34 12 30 6 25C3 24 3 18 4 15Z" fill="#1c1a18" />
        <circle cx="17" cy="17" r="3" fill="#777" />
        <circle cx="24" cy="17" r="3" fill="#777" />
        <circle cx="7" cy="17" r="3" fill="#000" />
        <path d="M27 27L36 36" stroke="#333" strokeWidth="3" />
      </g>
    ),
  },
  { id: "Br", art: <rect x="4" y="5" width="31" height="31" rx="2" fill="#6c290e" /> },
  { id: "Ai", run: true, art: <rect x="4" y="5" width="31" height="31" rx="2" fill="#845006" /> },
  { id: "Ps", art: <rect x="4" y="5" width="31" height="31" rx="2" fill="#08416a" /> },
  {
    id: "npp",
    run: true,
    art: (
      <g>
        <path d="M7 5H28L33 11V36H7Z" fill="url(#leaf)" stroke="#1c1c1c" strokeWidth="1.500" />
        <path d="M12 14V24M12 15H17V24M18 19H24M21 16V22M25 19H30" stroke="#111" strokeWidth="1.800" fill="none" />
        <path d="M25 26L36 4" stroke="#7a5a12" strokeWidth="4" />
      </g>
    ),
  },
  {
    id: "qgis",
    art: (
      <g fill="none">
        <circle cx="19" cy="20" r="12" stroke="#3f6c18" strokeWidth="6" />
        <path d="M24 25L33 35" stroke="#3f6c18" strokeWidth="6" />
        <circle cx="19" cy="20" r="8.500" fill="#5f5b52" />
        <path d="M16 17L24 25" stroke="#8a5024" strokeWidth="5" />
      </g>
    ),
  },
  {
    id: "globe",
    art: (
      <g>
        <circle cx="20" cy="20" r="15" fill="#5e6a6a" />
        <path d="M5 20C6 8 20 2 30 9C22 8 16 14 12 26Z" fill="#1d5a4a" />
        <path d="M16 16C26 14 34 20 30 34C26 36 24 36 22 35C28 28 24 20 16 16Z" fill="#123f60" />
      </g>
    ),
  },
  {
    id: "excel",
    art: (
      <g>
        <rect x="6" y="5" width="27" height="31" fill="#607060" stroke="#1a4a24" strokeWidth="2" />
        <path d="M11 9L24 29M24 9L11 29" stroke="#12401c" strokeWidth="5" />
        <path d="M24 20H33M22 26H33M26 31H33" stroke="#777" strokeWidth="2" />
      </g>
    ),
  },
  {
    id: "git",
    run: true,
    art: (
      <g>
        <path d="M20 4L28 13L20 20L12 13Z" fill="#78342e" />
        <path d="M12 13L20 21L12 29L4 20Z" fill="#26487a" />
        <path d="M28 13L36 20L28 29L20 21Z" fill="#24623c" />
        <path d="M20 21L28 29L20 37L12 29Z" fill="#7e6a24" />
      </g>
    ),
  },
  { id: "firefox", run: true, art: <FoxArt /> },
  {
    id: "claw",
    run: true,
    art: (
      <g>
        <g stroke="#8a4c10" strokeWidth="5" strokeLinecap="round">
          <path d="M7 14L13 22M13 7L16 18M20 5V18M28 7L25 18M34 14L27 22" />
        </g>
        <ellipse cx="20" cy="25" rx="12" ry="11" fill="#8a4c10" />
        <circle cx="20" cy="24" r="6.500" fill="#420e06" />
        <circle cx="20" cy="24" r="4" fill="#7c1a08" />
      </g>
    ),
  },
];

const labelColor: Record<string, string> = { Br: "text-[#1c0a04]", Ai: "text-[#8c8468]", Ps: "text-[#5a8494]" };

const Taskbar = () => (
  <div className={"absolute left-0 top-[2100px] flex h-[60px] w-[3840px] bg-gradient-to-r from-[#5b5551] via-[#5a5150] to-[#5f5955] " + UI}>
    <div className="flex w-[72px] items-center justify-center">
      <svg width="32" height="32" viewBox="0 0 32 32"><path d="M0 5L13 3V15H0ZM15 3L32 0V15H15ZM0 17H13V29L0 27ZM15 17H32V32L15 29Z" fill="#000" /></svg>
    </div>
    <div className="flex w-[72px] items-center justify-center">
      <svg width="34" height="34" viewBox="0 0 34 34" fill="none" stroke="#000" strokeWidth="2.400"><circle cx="22" cy="12" r="10" /><path d="M15 20L1 33" /></svg>
    </div>
    <div className="flex w-[72px] items-center justify-center">
      <svg width="32" height="32" viewBox="0 0 32 32" fill="none" stroke="#000" strokeWidth="2.400"><rect x="2" y="9" width="20" height="14" /><path d="M2 1V5H22V1M2 31V27H22V31M29 1V5M29 17V31" /><circle cx="29" cy="12" r="3.500" fill="#000" stroke="none" /></svg>
    </div>
    <div className="ml-[5px] flex">
      {taskIcons.map((t) => (
        <div key={t.id} className={"relative flex w-[74px] items-center justify-center " + (t.id === "firefox" ? "border-r-2 border-[#4a4644] bg-[#6b6663]" : "")}>
          <svg width="40" height="40" viewBox="0 0 40 40">{t.art}</svg>
          {labelColor[t.id] && (
            <span className={"absolute left-0 top-[19px] w-full text-center text-[20px] font-semibold leading-none " + labelColor[t.id]}>{t.id}</span>
          )}
          {t.run && <div className={"absolute bottom-0 h-[4px] bg-[#0d3526] " + (t.id === "firefox" ? "left-0 w-[74px]" : "left-[9px] w-[56px]")} />}
        </div>
      ))}
    </div>
    <div className="ml-auto flex items-center">
      <svg width="26" height="14" viewBox="0 0 26 14" fill="none" stroke="#000" strokeWidth="2.400"><path d="M1 13L13 1L25 13" /></svg>
      <svg className="ml-[40px]" width="26" height="26" viewBox="0 0 26 26" fill="none" stroke="#000" strokeWidth="2.400">
        <path d="M1.500 26A24 24 0 0 1 26 1.500" stroke="#35312f" />
        <path d="M7 26A19 19 0 0 1 26 8M14 26A12 12 0 0 1 26 14" />
        <circle cx="22" cy="22" r="3.500" fill="#000" stroke="none" />
      </svg>
      <svg className="ml-[33px]" width="34" height="28" viewBox="0 0 34 28" fill="none" stroke="#000" strokeWidth="2.200">
        <path d="M1 9H5L12 2V26L5 19H1Z" />
        <path d="M17 9Q20 14 17 19" />
        <path d="M22 5Q28 14 22 23M26 1Q35 14 26 27" stroke="#35312f" />
      </svg>
      <span className="ml-[29px] w-[56px] whitespace-nowrap text-[24px] leading-none tracking-[-0.045em] text-black">13:54</span>
      <svg className="ml-[36px]" width="34" height="34" viewBox="0 0 34 34" fill="none" stroke="#000" strokeWidth="2.400"><path d="M2 2H32V26H22L17 31L12 26H2Z" /></svg>
      <div className="ml-[40px] h-[60px] w-[2px] bg-[#474341]" />
      <div className="w-[6px]" />
    </div>
  </div>
);

const DesktopIcon = () => (
  <div className={"absolute left-[1847px] top-[1845px] flex w-[104px] flex-col items-center overflow-hidden " + UI}>
    <svg width="88" height="90" viewBox="0 0 40 40"><FoxArt /></svg>
    <span className="mt-[11px] whitespace-nowrap text-[23px] leading-[30px] tracking-[-0.03em] text-[#8a8a8a] [text-shadow:0_2px_3px_#000,0_0_2px_#000]">clip_2.svg</span>
  </div>
);

const Highlight = () => (
  <svg className="absolute left-[1868px] top-[1064px]" width="1252" height="332" viewBox="0 0 1252 332">
    <defs>
      <clipPath id="left"><rect x="0" y="0" width="83" height="332" /></clipPath>
      <clipPath id="right"><rect x="83" y="0" width="1169" height="332" /></clipPath>
    </defs>
    <ellipse cx="625.500" cy="166" rx="625.500" ry="165" fill="#f0928e" clipPath="url(#left)" />
    <ellipse cx="625.500" cy="166" rx="625.500" ry="165" fill="#666" clipPath="url(#right)" />
    <circle cx="642.500" cy="175" r="88.500" fill="#000" />
    <rect x="604" y="136" width="78" height="77" fill="none" stroke="#f04a28" strokeWidth="8" />
  </svg>
);

const Callout = () => (
  <div className={"absolute left-[96px] top-[550px] flex h-[320px] w-[3658px] " + MONO}>
    <div className="w-[62px] shrink-0 bg-gradient-to-r from-[#f0958f] from-75% to-[#a86863]" />
    <div className="flex flex-1 flex-col bg-white pt-[9px]">
      <div className="h-[289px] bg-[#ffff85] pl-[1px] pt-[2px] text-[62.300px] leading-[72.400px] text-[#74746a]">
        <p className="whitespace-pre font-bold text-[#ff0a0a]">Failed to identify initial controlflow path segment.</p>
        <p className="whitespace-pre">An intitial element was found but there seems to be no control flow path close enough to its</p>
        <p className="whitespace-pre">centre. If there are candidates nearby they are highlighted in red: Try using snap in your SVG</p>
        <p className="whitespace-pre">editor to increase drawing precision.</p>
      </div>
    </div>
  </div>
);

export default function App() {
  return (
    <div className="relative h-[2160px] w-[3840px] overflow-hidden bg-gradient-to-b from-[#603b39] via-[#5d3937] to-[#673c39]">
      <Gradients />
      <div className="absolute left-0 top-0 h-[4px] w-[1835px] bg-[#332424]" />
      <Illustrator />
      <Firefox />
      <DesktopIcon />
      <Highlight />
      <Taskbar />
      <div className="absolute left-[118px] top-[201px] whitespace-nowrap font-['DejaVu_Sans',sans-serif] text-[100px] leading-[116px] tracking-[0.080px] text-white">
        The drawing we did is not yet a valid program
      </div>
      <div className="absolute left-[117px] top-[367px] whitespace-nowrap font-['DejaVu_Sans',sans-serif] text-[62px] leading-[72px] tracking-[0.450px] text-white">
        Error message:
      </div>
      <Callout />
    </div>
  );
}
